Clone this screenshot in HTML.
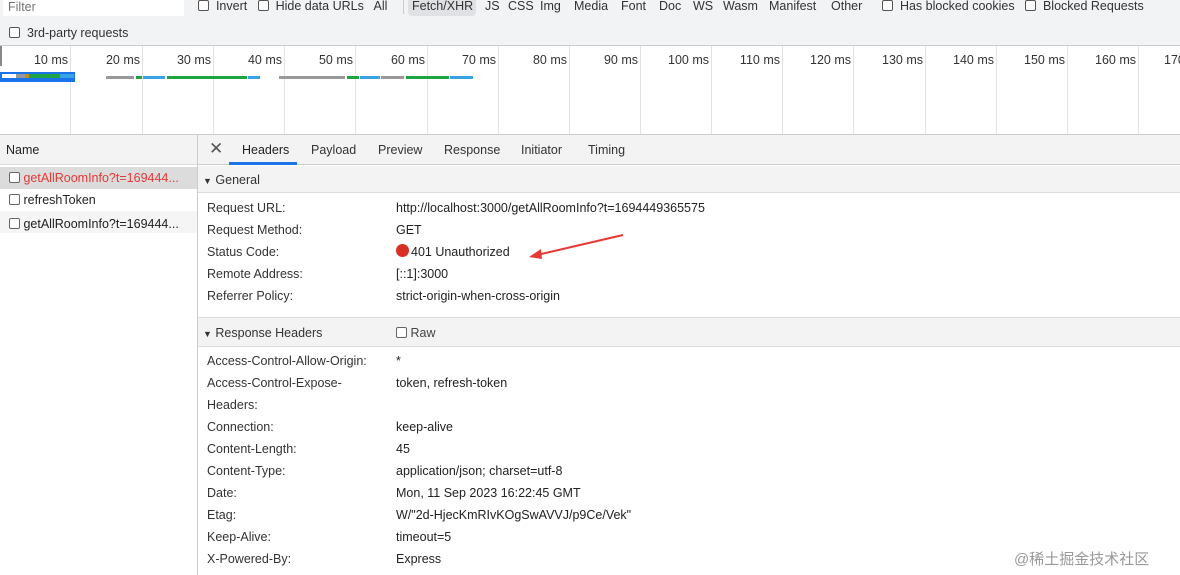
<!DOCTYPE html>
<html><head><meta charset="utf-8"><style>
*{margin:0;padding:0;box-sizing:border-box}
body{width:1180px;height:575px;overflow:hidden;background:#fff;font-family:"Liberation Sans","DejaVu Sans",sans-serif;font-size:12.5px;color:#222;position:relative}
.a{position:absolute;white-space:nowrap}
.cb{display:inline-block;width:11px;height:11px;border:1px solid #555;border-radius:2px;vertical-align:-1px;background:#fff}
.vl{position:absolute;top:46px;height:88px;width:1px;background:#e3e3e3}
.tl{position:absolute;top:53px;font-size:12.5px;color:#333;text-align:right;width:60px}
.bar{position:absolute;height:3px}
.f{position:absolute;top:-1px;color:#333}
</style></head><body>
<div class="a" style="left:0;top:0;width:1180px;height:46px;background:#f1f3f4"></div>
<div class="a" style="left:3px;top:0;width:181px;height:16px;background:#fff"></div>
<div class="a" style="left:8px;top:0;color:#777">Filter</div>
<div class="a" style="left:198px;top:-1px;color:#333"><span class="cb"></span>&nbsp; Invert &nbsp; <span class="cb"></span>&nbsp; Hide data URLs &nbsp; All</div>
<div class="a" style="left:403px;top:0;width:1px;height:14px;background:#ccc"></div>
<div class="a" style="left:408px;top:-3px;width:68px;height:19px;background:#dfe1e5;border-radius:4px"></div>
<span class="f" style="left:412px">Fetch/XHR</span><span class="f" style="left:485px">JS</span><span class="f" style="left:508px">CSS</span><span class="f" style="left:540px">Img</span><span class="f" style="left:574px">Media</span><span class="f" style="left:621px">Font</span><span class="f" style="left:659px">Doc</span><span class="f" style="left:693px">WS</span><span class="f" style="left:723px">Wasm</span><span class="f" style="left:769px">Manifest</span><span class="f" style="left:831px">Other</span>
<div class="a" style="left:882px;top:-1px;color:#333"><span class="cb"></span>&nbsp; Has blocked cookies &nbsp; <span class="cb"></span>&nbsp; Blocked Requests</div>
<div class="a" style="left:9px;top:26px;color:#333"><span class="cb"></span>&nbsp; 3rd-party requests</div>
<div class="a" style="left:0;top:45px;width:1180px;height:1px;background:#ccc"></div>
<div class="a" style="left:0;top:46px;width:2px;height:20px;background:#888"></div>
<div class="vl" style="left:70px"></div><div class="vl" style="left:142px"></div><div class="vl" style="left:213px"></div><div class="vl" style="left:284px"></div><div class="vl" style="left:355px"></div><div class="vl" style="left:427px"></div><div class="vl" style="left:498px"></div><div class="vl" style="left:569px"></div><div class="vl" style="left:640px"></div><div class="vl" style="left:711px"></div><div class="vl" style="left:782px"></div><div class="vl" style="left:853px"></div><div class="vl" style="left:925px"></div><div class="vl" style="left:996px"></div><div class="vl" style="left:1067px"></div><div class="vl" style="left:1138px"></div>
<div class="tl" style="left:8px">10 ms</div><div class="tl" style="left:80px">20 ms</div><div class="tl" style="left:151px">30 ms</div><div class="tl" style="left:222px">40 ms</div><div class="tl" style="left:293px">50 ms</div><div class="tl" style="left:365px">60 ms</div><div class="tl" style="left:436px">70 ms</div><div class="tl" style="left:507px">80 ms</div><div class="tl" style="left:578px">90 ms</div><div class="tl" style="left:649px">100 ms</div><div class="tl" style="left:720px">110 ms</div><div class="tl" style="left:791px">120 ms</div><div class="tl" style="left:863px">130 ms</div><div class="tl" style="left:934px">140 ms</div><div class="tl" style="left:1005px">150 ms</div><div class="tl" style="left:1076px">160 ms</div><div class="a" style="left:1164px;top:53px;color:#333">170</div>
<div class="a" style="left:0;top:72px;width:75px;height:10px;background:#1a73e8"></div>
<div class="a" style="left:2px;top:74px;width:14px;height:4px;background:#fff"></div>
<div class="a" style="left:16px;top:74px;width:9px;height:4px;background:#999"></div>
<div class="a" style="left:25px;top:74px;width:4px;height:4px;background:#c58a2b"></div>
<div class="a" style="left:29px;top:74px;width:31px;height:4px;background:#1ea446"></div>
<div class="a" style="left:60px;top:74px;width:14px;height:4px;background:#3aa3e3"></div>
<div class="bar" style="left:106px;top:76px;width:28px;background:#999"></div>
<div class="bar" style="left:136px;top:76px;width:6px;background:#1ea446"></div>
<div class="bar" style="left:143px;top:76px;width:22px;background:#3aa3e3"></div>
<div class="bar" style="left:167px;top:76px;width:80px;background:#1ea446"></div>
<div class="bar" style="left:248px;top:76px;width:12px;background:#3aa3e3"></div>
<div class="bar" style="left:279px;top:76px;width:66px;background:#999"></div>
<div class="bar" style="left:347px;top:76px;width:12px;background:#1ea446"></div>
<div class="bar" style="left:360px;top:76px;width:20px;background:#3aa3e3"></div>
<div class="bar" style="left:381px;top:76px;width:23px;background:#999"></div>
<div class="bar" style="left:406px;top:76px;width:43px;background:#1ea446"></div>
<div class="bar" style="left:450px;top:76px;width:23px;background:#3aa3e3"></div>
<div class="a" style="left:0;top:134px;width:1180px;height:1px;background:#ccc"></div>
<div class="a" style="left:0;top:135px;width:197px;height:30px;background:#f3f3f3;border-bottom:1px solid #ddd"></div>
<div class="a" style="left:6px;top:143px;color:#222">Name</div>
<div class="a" style="left:197px;top:135px;width:1px;height:440px;background:#ccc"></div>
<div class="a" style="left:0;top:167px;width:197px;height:22px;background:#dcdcdc"></div>
<div class="a" style="left:0;top:211px;width:197px;height:22px;background:#f5f5f5"></div>
<div class="a" style="left:9px;top:171px;color:#e53935"><span class="cb" style="border-color:#666"></span>&nbsp;getAllRoomInfo?t=169444...</div>
<div class="a" style="left:9px;top:193px"><span class="cb" style="border-color:#666"></span>&nbsp;refreshToken</div>
<div class="a" style="left:9px;top:217px"><span class="cb" style="border-color:#666"></span>&nbsp;getAllRoomInfo?t=169444...</div>
<div class="a" style="left:198px;top:135px;width:982px;height:30px;background:#f3f3f3;border-bottom:1px solid #ccc"></div>
<div class="a" style="left:209px;top:139px;font-size:17px;color:#555">✕</div>
<div class="a" style="left:242px;top:143px;color:#222">Headers</div>
<div class="a" style="left:229px;top:162px;width:68px;height:3px;background:#1a73e8"></div>
<div class="a" style="left:311px;top:143px;color:#333">Payload</div>
<div class="a" style="left:378px;top:143px;color:#333">Preview</div>
<div class="a" style="left:444px;top:143px;color:#333">Response</div>
<div class="a" style="left:521px;top:143px;color:#333">Initiator</div>
<div class="a" style="left:588px;top:143px;color:#333">Timing</div>
<div class="a" style="left:198px;top:166px;width:982px;height:27px;background:#f3f3f3;border-bottom:1px solid #ddd"></div>
<div class="a" style="left:203px;top:173px;color:#333"><span style="font-size:9px">▼</span> General</div>
<div class="a" style="left:207px;top:197px;line-height:22px;color:#333">Request URL:<br>Request Method:<br>Status Code:<br>Remote Address:<br>Referrer Policy:</div>
<div class="a" style="left:396px;top:197px;line-height:22px;color:#222">http://localhost:3000/getAllRoomInfo?t=1694449365575<br>GET<br><span style="display:inline-block;width:13px;height:13px;border-radius:50%;background:#d93025;vertical-align:-1px;margin-right:2px"></span>401 Unauthorized<br>[::1]:3000<br>strict-origin-when-cross-origin</div>
<svg class="a" style="left:525px;top:230px" width="104" height="32"><line x1="98" y1="5" x2="12" y2="25" stroke="#e53935" stroke-width="2"/><polygon points="4,27 16,19 17,29" fill="#e53935"/></svg>
<div class="a" style="left:198px;top:317px;width:982px;height:30px;background:#f3f3f3;border-top:1px solid #ddd;border-bottom:1px solid #ddd"></div>
<div class="a" style="left:203px;top:326px;color:#333"><span style="font-size:9px">▼</span> Response Headers</div>
<div class="a" style="left:396px;top:326px;color:#444"><span class="cb" style="border-color:#666"></span> Raw</div>
<div class="a" style="left:207px;top:350px;line-height:22px;color:#333">Access-Control-Allow-Origin:<br>Access-Control-Expose-<br>Headers:<br>Connection:<br>Content-Length:<br>Content-Type:<br>Date:<br>Etag:<br>Keep-Alive:<br>X-Powered-By:</div>
<div class="a" style="left:396px;top:350px;line-height:22px;color:#222">*<br>token, refresh-token<br>&nbsp;<br>keep-alive<br>45<br>application/json; charset=utf-8<br>Mon, 11 Sep 2023 16:22:45 GMT<br>W/"2d-HjecKmRIvKOgSwAVVJ/p9Ce/Vek"<br>timeout=5<br>Express</div>
<div class="a" style="left:1014px;top:548px;font-size:15px;color:#999;font-family:'Liberation Sans','Noto Sans CJK SC',sans-serif">@稀土掘金技术社区</div>
</body></html>
